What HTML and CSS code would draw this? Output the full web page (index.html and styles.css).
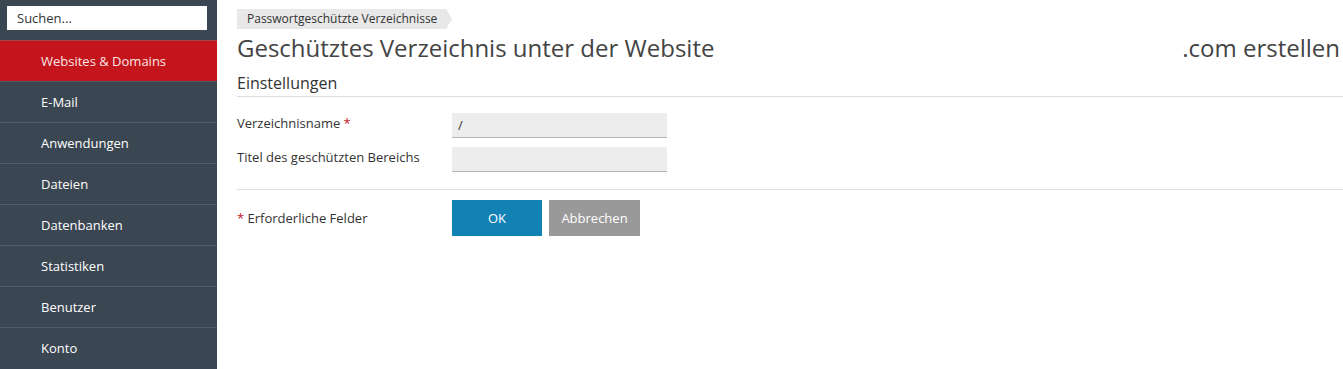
FILE: index.html
```html
<!DOCTYPE html>
<html lang="de">
<head>
  <meta charset="UTF-8" />
  <title>Geschütztes Verzeichnis erstellen</title>
  <link rel="stylesheet" href="styles.css">
</head>
<body>
  <div class="page">
    <div class="sidebar">
      <div class="search">
        <input type="text" placeholder="Suchen..." />
      </div>
      <ul class="nav">
        <li class="active">Websites &amp; Domains</li>
        <li>E-Mail</li>
        <li>Anwendungen</li>
        <li>Dateien</li>
        <li>Datenbanken</li>
        <li>Statistiken</li>
        <li>Benutzer</li>
        <li>Konto</li>
      </ul>
    </div>

    <div class="main">
      <div class="breadcrumb"><span>Passwortgeschützte Verzeichnisse</span></div>
      <h1 class="title">
        <span>Geschütztes Verzeichnis unter der Website</span>
        <span>.com erstellen</span>
      </h1>

      <h2 class="section-title">Einstellungen</h2>

      <div class="form-row">
        <label>Verzeichnisname <span class="req">*</span></label>
        <input type="text" value="/" />
      </div>
      <div class="form-row">
        <label>Titel des geschützten Bereichs</label>
        <input type="text" />
      </div>

      <div class="actions">
        <div class="note"><span class="req">*</span> Erforderliche Felder</div>
        <div class="buttons">
          <button class="btn-ok">OK</button>
          <button class="btn-cancel">Abbrechen</button>
        </div>
      </div>
    </div>
  </div>
</body>
</html>
```

FILE: styles.css
```css
body {
  margin: 0;
  font-family: "Open Sans", Arial, sans-serif;
  color: #333;
  background-color: #fff;
}
.page {
  display: flex;
  min-height: 369px;
}
.sidebar {
  width: 217px;
  flex-shrink: 0;
  background-color: #3a4651;
}
.search {
  padding: 6px 10px 10px 7px;
}
.search input {
  width: 200px;
  height: 24px;
  box-sizing: border-box;
  border: none;
  padding: 0 10px;
  font-family: inherit;
  font-size: 13px;
  color: #333;
  background-color: #fff;
}
.search input::placeholder {
  color: #333;
}
.nav {
  list-style: none;
  margin: 0;
  padding: 0;
}
.nav li {
  height: 40px;
  line-height: 40px;
  padding-left: 41px;
  border-top: 1px solid #4f5b66;
  color: #fff;
  font-size: 13px;
}
.nav li.active {
  background-color: #c4151c;
  border-top-color: #a8434a;
  color: #fbe6e6;
}
.main {
  flex: 1;
  padding: 6px 0 0 20px;
}
.breadcrumb span {
  display: inline-block;
  position: relative;
  height: 20px;
  line-height: 20px;
  padding: 0 9px 0 10px;
  background-color: #e8e8e8;
  font-size: 12px;
  color: #333;
}
.breadcrumb span::after {
  content: "";
  position: absolute;
  right: -6px;
  top: 0;
  border-left: 6px solid #e8e8e8;
  border-top: 10px solid transparent;
  border-bottom: 10px solid transparent;
}
.title {
  display: flex;
  justify-content: space-between;
  margin: 4px 3px 0 0;
  font-size: 24px;
  font-weight: normal;
  color: #444;
  line-height: 30px;
}
.section-title {
  margin: 9px 0 0;
  padding-bottom: 2px;
  font-size: 16px;
  font-weight: normal;
  line-height: 22px;
  color: #333;
  border-bottom: 1px solid #ddd;
}
.form-row {
  display: flex;
  align-items: flex-start;
  margin-top: 16px;
}
.form-row + .form-row {
  margin-top: 9px;
}
.form-row label {
  width: 215px;
  font-size: 13px;
  line-height: 20px;
}
.form-row input {
  width: 215px;
  height: 25px;
  box-sizing: border-box;
  border: none;
  border-bottom: 1px solid #b5b5b5;
  background-color: #ededed;
  padding: 0 6px;
  font-family: inherit;
  font-size: 13px;
  color: #333;
}
.req {
  color: #c4151c;
}
.actions {
  display: flex;
  align-items: center;
  margin-top: 17px;
  padding-top: 10px;
  border-top: 1px solid #ddd;
}
.note {
  width: 215px;
  font-size: 13px;
}
.buttons {
  display: flex;
  gap: 7px;
}
.buttons button {
  height: 36px;
  border: none;
  font-family: inherit;
  font-size: 13px;
  color: #fff;
  cursor: pointer;
}
.btn-ok {
  width: 90px;
  background-color: #1282b4;
}
.btn-cancel {
  width: 91px;
  background-color: #999;
}
```
